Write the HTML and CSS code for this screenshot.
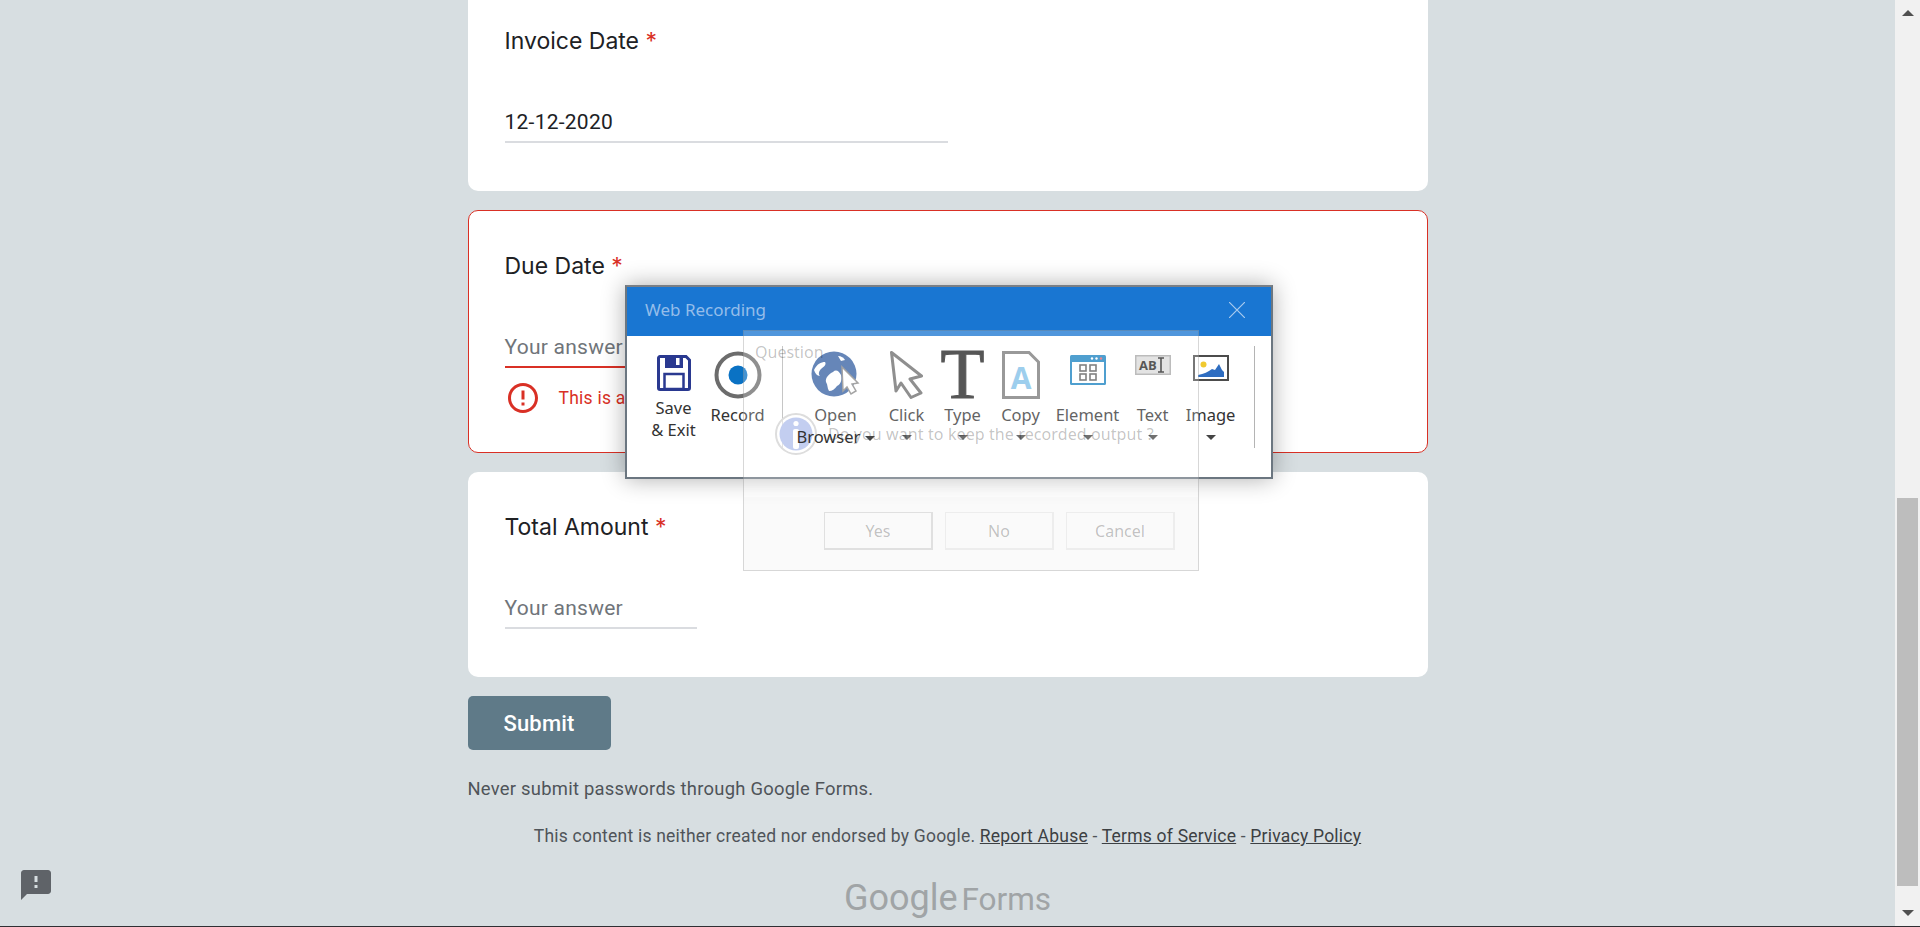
FILE: index.html
```html
<!DOCTYPE html>
<html>
<head>
  <title>Invoice form</title>
  <link rel="stylesheet" href="styles.css">
</head>
<body>
  <div class="screen">
    <div class="page">
      <div class="form">
        <div class="card card-first">
          <div class="q-title">Invoice Date <span class="req">*</span></div>
          <div class="field field-wide">12-12-2020</div>
        </div>

        <div class="card card-error">
          <div class="q-title">Due Date <span class="req">*</span></div>
          <div class="field field-wide field-bad placeholder">Your answer</div>
          <div class="err-row">
            <svg width="36" height="36" viewBox="0 0 24 24" fill="#d93025"><path d="M11 15h2v2h-2zm0-8h2v6h-2zm.99-5C6.47 2 2 6.48 2 12s4.47 10 9.99 10C17.52 22 22 17.52 22 12S17.52 2 11.99 2zM12 20c-4.42 0-8-3.58-8-8s3.58-8 8-8 8 3.58 8 8-3.58 8-8 8z"/></svg>
            <span>This is a required question</span>
          </div>
        </div>

        <div class="card">
          <div class="q-title">Total Amount <span class="req">*</span></div>
          <div class="field field-short placeholder">Your answer</div>
        </div>

        <button class="submit">Submit</button>
        <div class="never">Never submit passwords through Google Forms.</div>
        <div class="legal">This content is neither created nor endorsed by Google. <a href="#">Report Abuse</a> - <a href="#">Terms of Service</a> - <a href="#">Privacy Policy</a></div>
        <div class="brand"><span class="brand-g">Google</span> <span class="brand-f">Forms</span></div>
      </div>
    </div>
    <div class="scrollbar">
      <div class="arrow-up"></div>
      <div class="thumb"></div>
      <div class="arrow-down"></div>
    </div>
  </div>
  <div class="bottom-line"></div>

  <svg class="feedback" width="36" height="36" viewBox="0 0 24 24" fill="#5f6368"><path d="M20 2H4c-1.1 0-1.99.9-1.99 2L2 22l4-4h14c1.1 0 2-.9 2-2V4c0-1.1-.9-2-2-2zm-7 12h-2v-2h2v2zm0-4h-2V6h2v4z"/></svg>

  <!-- recorder window -->
  <div class="rec-window">
    <div class="rec-title">
      <span>Web Recording</span>
      <svg width="16" height="16" viewBox="0 0 16 16" stroke="#a9cbee" stroke-width="1.2"><path d="M0 0L16 16M16 0L0 16"/></svg>
    </div>
    <div class="toolbar">
      <div class="tool tool-save">
        <div class="tool-icon">
          <svg class="low" width="34" height="36" viewBox="0 0 34 36">
            <path d="M3 1.5H29L32.5 5V33a1.5 1.5 0 0 1-1.5 1.5H3A1.5 1.5 0 0 1 1.5 33V3A1.5 1.5 0 0 1 3 1.5z" fill="#fff" stroke="#2a3990" stroke-width="3"/>
            <rect x="8" y="2" width="18" height="11" fill="#2a3990"/>
            <rect x="19" y="3" width="3.5" height="7" fill="#fff"/>
            <rect x="7.5" y="19" width="19" height="15" fill="#fff" stroke="#2a3990" stroke-width="2.5"/>
          </svg>
        </div>
        <div class="tool-label">Save<br>&amp; Exit</div>
      </div>
      <div class="tool">
        <div class="tool-icon">
          <svg width="48" height="48" viewBox="0 0 48 48">
            <circle cx="24" cy="24" r="21.5" fill="#fff" stroke="#6c6c6c" stroke-width="4"/>
            <circle cx="24" cy="24" r="9.5" fill="#0a72c4"/>
          </svg>
        </div>
        <div class="tool-label">Record</div>
      </div>
      <div class="sep sep-first"></div>
      <div class="tool tool-open">
        <div class="tool-icon">
          <svg width="50" height="46" viewBox="0 0 50 46">
            <circle cx="23" cy="23" r="22.5" fill="#3661a2"/>
            <path d="M3 19C6 13 10 11 14 11C16 14 12 16 10 18C8 20 7 23 9 25C6 25 4 22 3 19z" fill="#fff"/>
            <path d="M22 21C25 18 28 20 30 24C31 29 30 33 26 35C24 38 21 40 18 40C16 37 17 34 15 31C14 27 18 23 22 21z" fill="#fff"/>
            <path d="M27 5C30 5 33 7 34 9L30 10z" fill="#fff"/>
            <path d="M31 16L47 32L41 33L45 40L40 43L36 36L32 40z" fill="#fff" stroke="#888" stroke-width="1.5"/>
          </svg>
        </div>
        <div class="tool-label">Open<br><span class="tool-over">Browser <i class="caret caret-inline"></i></span></div>
      </div>
      <div class="tool tool-click">
        <div class="tool-icon">
          <svg width="33" height="48" viewBox="0 0 33 48">
            <path d="M1.5 1.5L31.5 25L20 28L31 42L21 46.5L11 32L6 40z" fill="#fff" stroke="#6c6c6c" stroke-width="3" stroke-linejoin="round"/>
          </svg>
        </div>
        <div class="tool-label">Click</div>
        <i class="caret"></i>
      </div>
      <div class="tool tool-type">
        <div class="tool-icon tool-t">T</div>
        <div class="tool-label">Type</div>
        <i class="caret"></i>
      </div>
      <div class="tool tool-copy">
        <div class="tool-icon">
          <svg width="38" height="48" viewBox="0 0 38 48">
            <path d="M1.5 1.5H27L36.5 11V46.5H1.5z" fill="#fff" stroke="#797979" stroke-width="3"/>
            <text x="19" y="38" text-anchor="middle" class="copy-a">A</text>
          </svg>
        </div>
        <div class="tool-label">Copy</div>
        <i class="caret"></i>
      </div>
      <div class="tool tool-element">
        <div class="tool-icon">
          <svg class="low" width="36" height="30" viewBox="0 0 36 30">
            <rect width="36" height="30" rx="1.5" fill="#1881c0"/>
            <rect x="2" y="7" width="32" height="21" fill="#fff"/>
            <circle cx="22" cy="3.5" r="1.2" fill="#fff"/>
            <circle cx="26.5" cy="3.5" r="1.2" fill="#fff"/>
            <circle cx="31" cy="3.5" r="1.2" fill="#e8606c"/>
            <g fill="none" stroke="#5a5a5a" stroke-width="1.6">
              <rect x="10" y="10" width="6" height="6"/>
              <rect x="20" y="10" width="6" height="6"/>
              <rect x="10" y="19" width="6" height="6"/>
              <rect x="20" y="19" width="6" height="6"/>
            </g>
          </svg>
        </div>
        <div class="tool-label">Element</div>
        <i class="caret"></i>
      </div>
      <div class="tool tool-text">
        <div class="tool-icon">
          <svg class="low" width="36" height="20" viewBox="0 0 36 20">
            <rect x="0.75" y="0.75" width="34.5" height="18.5" fill="#dadada" stroke="#a8a8a8" stroke-width="1.5"/>
            <text x="4" y="15" class="abi">AB</text>
            <path d="M23 3H29M26 3V17M23 17H29" stroke="#222" stroke-width="1.6" fill="none"/>
          </svg>
        </div>
        <div class="tool-label">Text</div>
        <i class="caret"></i>
      </div>
      <div class="tool tool-image">
        <div class="tool-icon">
          <svg class="low" width="36" height="26" viewBox="0 0 36 26">
            <rect x="1" y="1" width="34" height="24" fill="#fff" stroke="#4c4c4c" stroke-width="2"/>
            <circle cx="10.5" cy="9.5" r="3" fill="#f0c92f"/>
            <path d="M5 22V20C11 19 15 17 19 14L22 15L26 9L29 15L31 17V22z" fill="#2e6dc1"/>
          </svg>
        </div>
        <div class="tool-label">Image</div>
        <i class="caret"></i>
      </div>
      <div class="sep sep-last"></div>
    </div>
  </div>

  <!-- fading confirm dialog on top of the recorder -->
  <div class="ask">
    <div class="ask-body">
      <div class="ask-title">Question</div>
      <div class="ask-row">
        <svg class="ask-icon" width="42" height="42" viewBox="0 0 42 42">
          <circle cx="21" cy="21" r="20" fill="#fff" fill-opacity=".5" stroke="#ddd" stroke-width="2"/>
          <circle cx="21" cy="21" r="16.5" fill="#c3cef0"/>
          <circle cx="21" cy="10.5" r="2.6" fill="#fff"/>
          <rect x="18" y="16" width="6" height="20" rx="2" fill="#fff"/>
        </svg>
        <span class="ask-msg">Do you want to keep the recorded output ?</span>
      </div>
    </div>
    <div class="ask-foot">
      <div class="ask-btn ask-btn-main">Yes</div>
      <div class="ask-btn">No</div>
      <div class="ask-btn">Cancel</div>
    </div>
  </div>
</body>
</html>
```

FILE: styles.css
```css
* {
  box-sizing: border-box;
}

html, body {
  height: 100%;
}

body {
  margin: 0;
  overflow: hidden;
  display: flex;
  flex-direction: column;
  background-color: #d7dee1;
  font-family: Roboto, sans-serif;
  color: #202124;
}

.screen {
  flex: 1;
  display: flex;
  min-height: 0;
}

.bottom-line {
  height: 1px;
  background-color: #2f2f33;
}

.page {
  flex: 1;
  display: flex;
  justify-content: center;
}

.form {
  width: 960px;
}

/* Form cards */
.card {
  background-color: #fff;
  border-radius: 10px;
  padding: 39px 37px 48px;
  margin-bottom: 19px;
}

.card-first {
  padding-top: 25px;
  border-radius: 0 0 10px 10px;
}

.card-error {
  border: 1px solid #d93025;
  padding: 39px 36px 36px;
}

.q-title {
  font-family: Inter, sans-serif;
  font-size: 23px;
  line-height: 33px;
  white-space: nowrap;
}

.req {
  color: #d93025;
}

.field {
  margin-top: 49px;
  font-size: 21px;
  letter-spacing: .25px;
  line-height: 30px;
  padding-bottom: 4px;
  border-bottom: 2px solid #dadce0;
}

.field-wide {
  width: 443px;
}

.field-short {
  width: 192px;
}

.field-bad {
  border-bottom-color: #d93025;
}

.placeholder {
  color: #70757a;
}

.err-row {
  display: flex;
  align-items: center;
  gap: 18px;
  margin-top: 12px;
  font-size: 17.5px;
  letter-spacing: .25px;
  color: #d93025;
}

/* Below the cards */
.submit {
  display: block;
  width: 143px;
  height: 54px;
  border: none;
  border-radius: 5px;
  background-color: #5f7a88;
  color: #fff;
  font-family: Roboto, sans-serif;
  font-size: 22px;
  font-weight: 500;
  letter-spacing: .2px;
}

.never {
  margin-top: 29px;
  font-size: 18.4px;
  line-height: 20px;
  letter-spacing: .25px;
  color: #4f5459;
}

.legal {
  margin-top: 27px;
  font-size: 17.5px;
  line-height: 20px;
  letter-spacing: .22px;
  text-align: center;
  color: #4f5459;
}

.legal a {
  color: #3c4043;
}

.brand {
  margin-top: 30px;
  text-align: center;
  color: #a0a4a6;
  line-height: 44px;
  white-space: nowrap;
}

.brand-g {
  font-size: 36px;
}

.brand-f {
  font-size: 31.5px;
}

/* Scrollbar */
.scrollbar {
  width: 25px;
  background-color: #f1f1f1;
  display: flex;
  flex-direction: column;
  align-items: center;
  padding: 10px 0;
}

.arrow-up, .arrow-down {
  width: 0;
  height: 0;
  border-left: 6px solid transparent;
  border-right: 6px solid transparent;
}

.arrow-up {
  border-bottom: 6px solid #505050;
}

.arrow-down {
  border-top: 6px solid #505050;
  margin-top: 24px;
}

.thumb {
  width: 21px;
  height: 388px;
  margin-top: auto;
  background-color: #bdbdbd;
}

.feedback {
  position: fixed;
  left: 18px;
  top: 867px;
}

/* Recorder window */
.rec-window {
  position: absolute;
  left: 625px;
  top: 285px;
  width: 648px;
  height: 194px;
  background-color: #fff;
  border: 2px solid #6b7680;
  border-top-color: #7a7f85;
  box-shadow: 0 0 22px rgba(0, 0, 0, .32);
  font-family: "Noto Sans", sans-serif;
}

.rec-title {
  height: 49px;
  background-color: #1976d2;
  color: #94bdea;
  font-size: 17px;
  display: flex;
  align-items: center;
  justify-content: space-between;
  padding: 0 26px 4px 18px;
}

.toolbar {
  display: flex;
  align-items: flex-start;
  padding: 15px 0 0 14.5px;
}

.tool {
  display: flex;
  flex-direction: column;
  align-items: center;
  width: 64px;
  flex: none;
}

.tool-icon {
  height: 48px;
  display: flex;
  justify-content: center;
  align-items: flex-start;
}

.low {
  margin-top: 4px;
}

.tool-label {
  margin-top: 5px;
  font-size: 16.5px;
  line-height: 22px;
  color: #333;
  text-align: center;
  white-space: nowrap;
}

.tool-save .tool-label {
  margin-top: -2px;
}

.tool-open {
  width: 90px;
}

.tool-over {
  position: relative;
  z-index: 2;
}

.tool-click {
  width: 52px;
}

.tool-type {
  width: 60px;
}

.tool-copy {
  width: 56px;
}

.tool-element {
  width: 78px;
}

.tool-text {
  width: 52px;
}

.tool-t {
  font-family: "Liberation Serif", serif;
  font-size: 72px;
  line-height: 46px;
  color: #222;
  -webkit-text-stroke: 1px #222;
}

.copy-a {
  font-family: "Open Sans", sans-serif;
  font-size: 30px;
  font-weight: 700;
  fill: #7fbfe8;
}

.abi {
  font-family: "Open Sans", sans-serif;
  font-size: 13px;
  font-weight: 700;
  fill: #222;
}

.caret {
  display: block;
  width: 0;
  height: 0;
  margin-top: 9px;
  border-left: 5px solid transparent;
  border-right: 5px solid transparent;
  border-top: 5px solid #444;
}

.caret-inline {
  display: inline-block;
  margin: 0 0 2px 0;
}

.sep {
  width: 1px;
  height: 102px;
  flex: none;
  background-color: #b4b4b4;
  margin-top: -5px;
}

.sep-first {
  margin-left: 12px;
  margin-right: 8px;
}

.sep-last {
  margin-left: 11px;
}

/* Confirm dialog */
.ask {
  position: absolute;
  z-index: 1;
  left: 743px;
  top: 330px;
  width: 456px;
  height: 241px;
  display: flex;
  flex-direction: column;
  background-color: rgba(255, 255, 255, .24);
  border: 1px solid rgba(110, 110, 110, .28);
  font-family: "Noto Sans", sans-serif;
  font-size: 16px;
  color: rgba(0, 0, 0, .24);
}

.ask-body {
  height: 166px;
  padding: 11px 0 0 11px;
}

.ask-title {
  line-height: 20px;
}

.ask-row {
  display: flex;
  align-items: center;
  gap: 11px;
  margin: 51px 0 0 20px;
}

.ask-msg {
  white-space: nowrap;
  letter-spacing: .1px;
}

.ask-foot {
  flex: 1;
  display: flex;
  justify-content: flex-end;
  gap: 12px;
  padding: 15px 23px 0 0;
  background-color: rgba(240, 240, 240, .3);
}

.ask-btn {
  width: 109px;
  height: 38px;
  line-height: 36px;
  text-align: center;
  border: 1px solid rgba(0, 0, 0, .05);
  border-right-width: 2px;
  border-bottom-width: 2px;
}

.ask-btn-main {
  border-color: rgba(0, 0, 0, .1);
}
```
